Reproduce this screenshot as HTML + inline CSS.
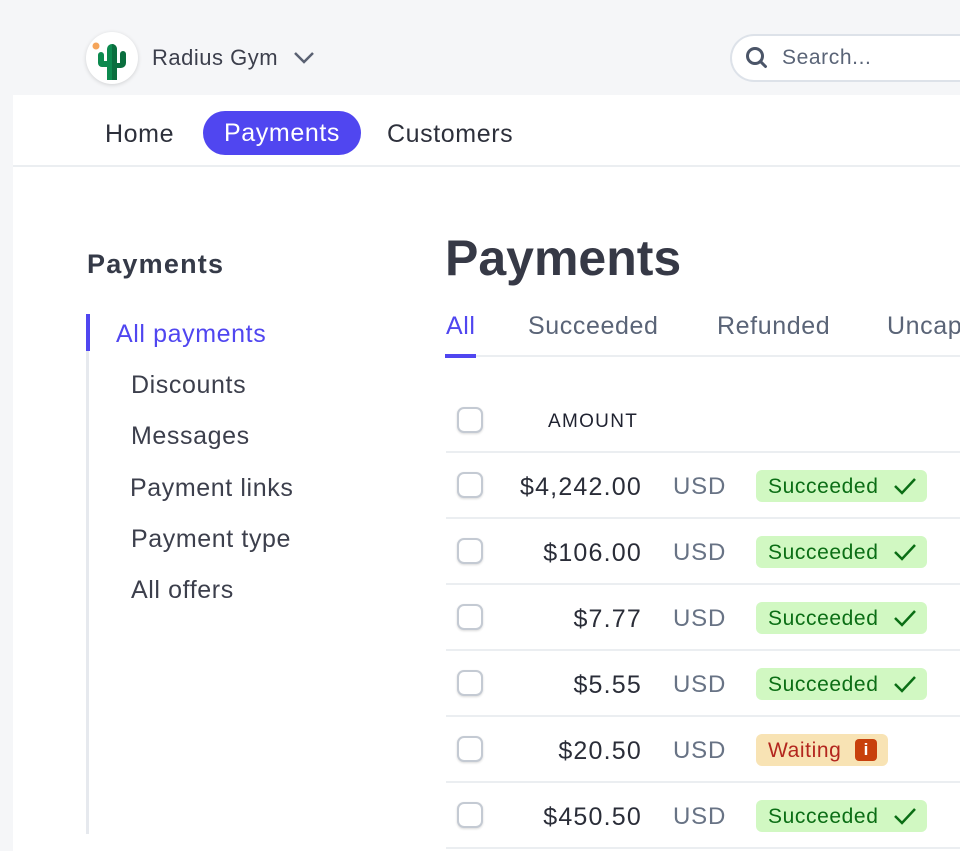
<!DOCTYPE html><html><head><style>
*{margin:0;padding:0;box-sizing:border-box}
html,body{width:960px;height:851px;overflow:hidden}
body{background:#f5f6f8;font-family:"Liberation Sans",sans-serif;position:relative;color:#3c3f4c}
.a{position:absolute;white-space:nowrap}
.t{font-size:25px;letter-spacing:.6px}
.panel{position:absolute;left:13px;top:95px;width:947px;height:756px;background:#fff}
.cb{position:absolute;left:457px;width:26px;height:26px;border:2px solid #c4cad3;border-radius:7px;background:#fff;box-shadow:0 1px 2px rgba(0,0,0,.15)}
.amt{position:absolute;right:318px;font-size:25px;letter-spacing:1.2px;color:#2a2d38}
.usd{position:absolute;left:673px;font-size:24px;letter-spacing:.8px;color:#687385}
.bd{position:absolute;left:756px;height:32px;border-radius:6px;font-size:21px;letter-spacing:.6px;padding:1px 12px 0;line-height:32px}
.ok{background:#d1f8c2;color:#0b6e15;width:171px}
.wt{background:#f8e3b4;color:#b3261e;width:132px}
.hr{position:absolute;left:446px;width:514px;height:2px;background:#ebeef1}
.ck{position:absolute;left:893px;width:24px;height:20px}
</style></head><body>
<div class="a" style="left:86px;top:32px;width:52px;height:52px;border-radius:50%;background:#fff;box-shadow:0 1px 4px rgba(0,0,0,.15)">
<svg width="52" height="52" viewBox="0 0 52 52"><circle cx="10" cy="14" r="3.5" fill="#f5a55a"/><path d="M21 48V17a5 5 0 0 1 10 0v31z" fill="#0d8a4f"/><path d="M21 35h-5a4 4 0 0 1-4-4v-8a3 3 0 0 1 6 0v6h3z" fill="#0d8a4f"/><path d="M31 31h3v-9a3 3 0 0 1 6 0v9a5 5 0 0 1-5 5h-4z" fill="#0a6e3e"/><path d="M26 12a5 5 0 0 1 5 5v31h-5z" fill="#0a6e3e"/></svg></div>
<div class="a" style="left:152px;top:45px;font-size:22px;letter-spacing:.5px;color:#3c3f4c">Radius Gym</div>
<svg class="a" style="left:293px;top:50px" width="22" height="16"><path d="M2 3l9 9 9-9" stroke="#5a6172" stroke-width="2.5" fill="none"/></svg>
<div class="a" style="left:730px;top:34px;width:230px;height:48px;border:2px solid #dde2e9;border-right:none;border-radius:24px 0 0 24px;background:#fff"></div>
<svg class="a" style="left:744px;top:45px" width="26" height="26"><circle cx="11" cy="11" r="7.5" stroke="#4b5568" stroke-width="3" fill="none"/><path d="M16.5 16.5l5 5" stroke="#4b5568" stroke-width="3" stroke-linecap="round"/></svg>
<div class="a" style="left:782px;top:46px;font-size:21px;letter-spacing:.6px;color:#5a6477">Search...</div>
<div class="panel"></div>
<div class="a" style="left:13px;top:165px;width:947px;height:2px;background:#ebeef1"></div>
<div class="a t" style="left:105px;top:120px;color:#2d303b">Home</div>
<div class="a t" style="left:203px;top:111px;width:158px;height:44px;border-radius:22px;background:#5046f0;color:#fff;text-align:center;line-height:45px">Payments</div>
<div class="a t" style="left:387px;top:120px;color:#2d303b">Customers</div>
<div class="a" style="left:87px;top:249px;font-size:27px;letter-spacing:1.2px;font-weight:bold;color:#353a48">Payments</div>
<div class="a" style="left:86px;top:314px;width:3px;height:520px;background:#e6e9ee"></div>
<div class="a" style="left:86px;top:314px;width:4px;height:37px;background:#5046f0"></div>
<div class="a t" style="left:116px;top:320px;color:#5046f0">All payments</div>
<div class="a t" style="left:131px;top:371px">Discounts</div>
<div class="a t" style="left:131px;top:422px">Messages</div>
<div class="a t" style="left:130px;top:474px">Payment links</div>
<div class="a t" style="left:131px;top:525px">Payment type</div>
<div class="a t" style="left:131px;top:576px">All offers</div>
<div class="a" style="left:445px;top:229px;font-size:50px;font-weight:bold;color:#363946">Payments</div>
<div class="a t" style="left:446px;top:312px;color:#5046f0">All</div>
<div class="a t" style="left:528px;top:312px;color:#5a6477">Succeeded</div>
<div class="a t" style="left:717px;top:312px;color:#5a6477">Refunded</div>
<div class="a t" style="left:887px;top:312px;width:73px;overflow:hidden;color:#5a6477">Uncaptured</div>
<div class="hr" style="top:355px"></div>
<div class="a" style="left:445px;top:354px;width:31px;height:4px;background:#5046f0"></div>
<div class="cb" style="top:407px"></div>
<div class="a" style="left:548px;top:411px;font-size:19px;letter-spacing:1.3px;color:#1f2230">AMOUNT</div>
<div class="hr" style="top:451px"></div>
<div class="cb" style="top:472px"></div><div class="amt" style="top:473px">$4,242.00</div><div class="usd" style="top:473px">USD</div><div class="bd ok" style="top:470px">Succeeded</div><svg class="ck" style="top:476px" viewBox="0 0 24 20"><path d="M2 10l7 7L22 3" stroke="#0b6e15" stroke-width="2.5" fill="none"/></svg>
<div class="hr" style="top:517px"></div>
<div class="cb" style="top:538px"></div><div class="amt" style="top:539px">$106.00</div><div class="usd" style="top:539px">USD</div><div class="bd ok" style="top:536px">Succeeded</div><svg class="ck" style="top:542px" viewBox="0 0 24 20"><path d="M2 10l7 7L22 3" stroke="#0b6e15" stroke-width="2.5" fill="none"/></svg>
<div class="hr" style="top:583px"></div>
<div class="cb" style="top:604px"></div><div class="amt" style="top:605px">$7.77</div><div class="usd" style="top:605px">USD</div><div class="bd ok" style="top:602px">Succeeded</div><svg class="ck" style="top:608px" viewBox="0 0 24 20"><path d="M2 10l7 7L22 3" stroke="#0b6e15" stroke-width="2.5" fill="none"/></svg>
<div class="hr" style="top:649px"></div>
<div class="cb" style="top:670px"></div><div class="amt" style="top:671px">$5.55</div><div class="usd" style="top:671px">USD</div><div class="bd ok" style="top:668px">Succeeded</div><svg class="ck" style="top:674px" viewBox="0 0 24 20"><path d="M2 10l7 7L22 3" stroke="#0b6e15" stroke-width="2.5" fill="none"/></svg>
<div class="hr" style="top:715px"></div>
<div class="cb" style="top:736px"></div><div class="amt" style="top:737px">$20.50</div><div class="usd" style="top:737px">USD</div><div class="bd wt" style="top:734px">Waiting</div><div class="a" style="left:855px;top:739px;width:22px;height:22px;background:#c8400c;color:#fff;border-radius:4px;font-size:17px;font-weight:bold;text-align:center;line-height:22px">i</div>
<div class="hr" style="top:781px"></div>
<div class="cb" style="top:802px"></div><div class="amt" style="top:803px">$450.50</div><div class="usd" style="top:803px">USD</div><div class="bd ok" style="top:800px">Succeeded</div><svg class="ck" style="top:806px" viewBox="0 0 24 20"><path d="M2 10l7 7L22 3" stroke="#0b6e15" stroke-width="2.5" fill="none"/></svg>
<div class="hr" style="top:847px"></div>
</body></html>
